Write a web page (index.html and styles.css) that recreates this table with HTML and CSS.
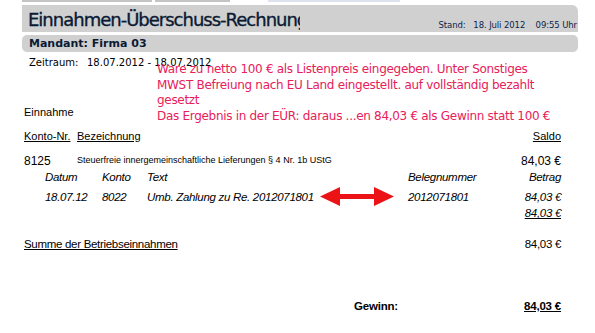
FILE: index.html
```html
<!DOCTYPE html>
<html lang="de">
<head>
  <meta charset="UTF-8">
  <title>Einnahmen-Überschuss-Rechnung</title>
  <link rel="stylesheet" href="styles.css">
</head>
<body>
  <div class="page">
    <div class="tabs">
      <span class="tab t1"></span>
      <span class="tab t2"></span>
      <span class="tab t3"></span>
    </div>
    <div class="titlebar">
      <h1>Einnahmen-Überschuss-Rechnung</h1>
      <div class="stand">Stand:&nbsp;&nbsp; 18. Juli 2012&nbsp;&nbsp;&nbsp; 09:55 Uhr</div>
    </div>
    <div class="mandant">Mandant: Firma 03</div>

    <div class="report">
      <div class="zeitraum"><span class="lbl">Zeitraum:</span>18.07.2012 - 18.07.2012</div>

      <div class="note">
        Ware zu netto 100 € als Listenpreis eingegeben. Unter Sonstiges<br>
        MWST Befreiung nach EU Land eingestellt. auf vollständig bezahlt<br>
        gesetzt<br>
        Das Ergebnis in der EÜR: daraus ...en 84,03 € als Gewinn statt 100 €
      </div>

      <div class="section">Einnahme</div>

      <div class="row head">
        <span class="nr"><u>Konto-Nr.</u></span>
        <span class="bez"><u>Bezeichnung</u></span>
        <span class="amt"><u>Saldo</u></span>
      </div>

      <div class="row konto">
        <span class="nr">8125</span>
        <span class="bez small">Steuerfreie innergemeinschaftliche Lieferungen § 4 Nr. 1b UStG</span>
        <span class="amt">84,03 €</span>
      </div>

      <div class="buchung">
        <span class="th">Datum</span><span class="th">Konto</span><span class="th">Text</span><span class="th"></span><span class="th">Belegnummer</span><span class="th amt">Betrag</span>
        <span>18.07.12</span><span>8022</span><span>Umb. Zahlung zu Re. 2012071801</span>
        <span class="arrow">
          <svg width="74" height="20" viewBox="0 0 74 20">
            <path d="M0 9.5 L20 0 L20 7 L54 7 L54 0 L74 9.5 L54 19 L54 12 L20 12 L20 19 Z" fill="#ec1317"/>
          </svg>
        </span>
        <span>2012071801</span><span class="amt">84,03 €</span>
        <span></span><span></span><span></span><span></span><span></span><span class="amt"><u>84,03 €</u></span>
      </div>

      <div class="row summe">
        <span class="nr wide"><u>Summe der Betriebseinnahmen</u></span>
        <span class="amt">84,03 €</span>
      </div>

      <div class="row gewinn">
        <span class="glbl">Gewinn:</span>
        <span class="amt"><u>84,03 €</u></span>
      </div>
    </div>
  </div>
</body>
</html>
```

FILE: styles.css
```css
body { margin: 0; background: #fff; color: #000; font-family: 'Liberation Sans', Arial, sans-serif; font-size: 11px; }
.page { width: 595px; height: 333px; overflow: hidden; }

.tabs { display: flex; height: 3px; padding-left: 22px; gap: 3px; }
.tab { display: block; height: 2px; }
.tab.t1 { width: 130px; background: #c4c4c4; }
.tab.t2 { width: 75px; background: #c4c4c4; }
.tab.t3 { width: 132px; margin-left: 35px; background: #dde4f0; }

.titlebar { margin: 2px 17px 0 22px; height: 27px; background: #d0d0d0; border-radius: 0 6px 0 0; display: flex; align-items: flex-end; justify-content: space-between; }
.titlebar h1 { margin: 0; width: 272px; padding-left: 6px; overflow: hidden; white-space: nowrap; font-family: 'DejaVu Sans', Verdana, sans-serif; font-weight: normal; font-size: 18px; line-height: 25px; color: #0b1a33; letter-spacing: -1px; -webkit-text-stroke: 0.35px #0b1a33; }
.stand { font-family: 'DejaVu Sans', Verdana, sans-serif; font-size: 8.5px; color: #0a1f4d; padding: 0 1px 2px 0; white-space: nowrap; letter-spacing: -0.1px; }

.mandant { margin: 3px 17px 0 22px; height: 17px; line-height: 17px; background: #d0d0d0; border-radius: 5px; padding-left: 7px; font-family: 'DejaVu Sans', Verdana, sans-serif; font-size: 11px; font-weight: bold; color: #0b1a33; }

.report { position: relative; padding: 0 34px 0 22px; }
.zeitraum { padding: 4px 0 0 7px; font-family: 'DejaVu Sans', Verdana, sans-serif; font-size: 10px; line-height: 13px; }
.zeitraum .lbl { display: inline-block; width: 58px; }

/* Notiz liegt über dem Bericht */
.note { position: absolute; left: 157px; top: 10px; font-family: 'DejaVu Sans', Verdana, sans-serif; font-size: 12px; line-height: 15.6px; color: #e8205a; white-space: nowrap; letter-spacing: -0.3px; }

.section { margin-top: 37px; padding-left: 2px; }

.row { display: flex; align-items: baseline; padding-left: 2px; }
.row .nr { width: 53px; }
.row .bez { flex: 1; }
.row .amt, .buchung .amt { text-align: right; margin-left: auto; }
.row.head { margin-top: 12px; }
.row.konto { margin-top: 10px; }
.row.konto .nr { font-size: 12px; position: relative; top: 2px; }
.small { font-size: 9px; }
.row.konto .amt { font-size: 12px; position: relative; top: 2px; }

.buchung { display: grid; grid-template-columns: 57px 45px 173px 88px 1fr 60px; margin-top: 5px; padding-left: 23px; font-style: italic; font-size: 11.5px; line-height: 13px; align-items: center; white-space: nowrap; letter-spacing: -0.3px; }
.buchung .th { margin-bottom: 3px; }
.arrow { display: flex; }
.arrow svg { display: block; }

.row.summe { margin-top: 18px; font-size: 11.5px; letter-spacing: -0.3px; }
.row .wide { width: auto; }
.row.gewinn { margin-top: 50px; font-size: 11.5px; font-weight: bold; letter-spacing: -0.2px; }
.glbl { margin-left: 330px; }
```
